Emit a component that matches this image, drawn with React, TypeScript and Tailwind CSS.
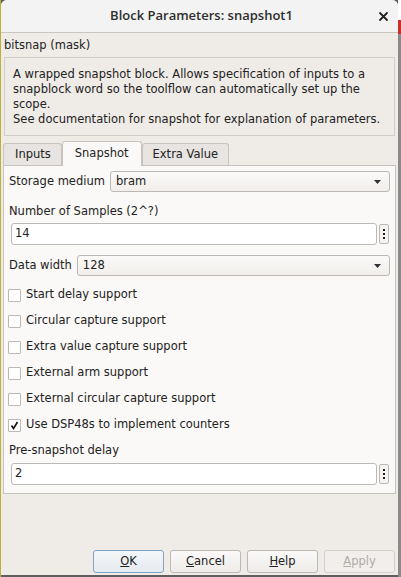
const font = { fontFamily: '"DejaVu Sans", "Liberation Sans", sans-serif' };

const checks = [
  { label: "Start delay support", on: false },
  { label: "Circular capture support", on: false },
  { label: "Extra value capture support", on: false },
  { label: "External arm support", on: false },
  { label: "External circular capture support", on: false },
  { label: "Use DSP48s to implement counters", on: true },
];

function Combo({ value }: { value: string }) {
  return (
    <div className="flex-1 h-[21px] flex items-center justify-between pl-[5px] pr-[8px] rounded-[3px] border border-[#bcb8b3] bg-gradient-to-b from-[#fbfaf9] to-[#f1eeeb] text-[11.5px] text-[#222]">
      <span>{value}</span>
      <svg width="7" height="4" viewBox="0 0 7 4">
        <path d="M0 0 L7 0 L3.5 4 Z" fill="#333" />
      </svg>
    </div>
  );
}

function Field({ value }: { value: string }) {
  return (
    <div className="flex items-center gap-[2px] pl-[7px] pr-[6px]">
      <div className="flex-1 h-[22px] flex items-center pl-[3px] rounded-[3px] border border-[#bcb8b3] bg-white text-[11.5px] text-[#222]">
        {value}
      </div>
      <div className="w-[10px] h-[20px] rounded-[2px] border border-[#bcb8b3] bg-[#f5f3f1] flex flex-col items-center justify-center gap-[2px]">
        <span className="w-[2px] h-[2px] bg-[#222]" />
        <span className="w-[2px] h-[2px] bg-[#222]" />
        <span className="w-[2px] h-[2px] bg-[#222]" />
      </div>
    </div>
  );
}

function Btn({ children, focus, disabled }: { children: React.ReactNode; focus?: boolean; disabled?: boolean }) {
  return (
    <button
      className={
        "w-[71px] h-[23px] rounded-[3px] border text-[11.5px] " +
        (focus
          ? "border-[#7fa3c6] bg-gradient-to-b from-[#f3f6f9] to-[#e6ebf0] text-[#222]"
          : disabled
          ? "border-[#d3cfcb] bg-[#f1eeeb] text-[#b0aca8]"
          : "border-[#bcb8b3] bg-gradient-to-b from-[#fbfaf9] to-[#eeebe8] text-[#222]")
      }
    >
      {children}
    </button>
  );
}

export default function App() {
  return (
    <div style={font} className="w-[401px] h-[577px] bg-[#5e5e5e] flex overflow-hidden">
      <div className="w-[1px] bg-[#b8b23a]" />
      <div className="w-[397px] h-[575px] flex flex-col rounded-t-[6px] overflow-hidden bg-[#efebe7]">
        {/* title bar */}
        <div className="h-[33px] shrink-0 flex items-center bg-[#f3f3f3] border-b border-[#c9c6c2] relative">
          <div className="flex-1 text-center text-[13px] text-[#2e2e2e] font-semibold pl-[4px]" style={{ fontFamily: '"Open Sans", sans-serif' }}>
            Block Parameters: snapshot1
          </div>
          <div className="absolute right-[9px] top-[11px]">
            <svg width="11" height="11" viewBox="0 0 11 11">
              <path d="M2 2 L9 9 M9 2 L2 9" stroke="#222" strokeWidth="1.8" strokeLinecap="round" />
            </svg>
          </div>
        </div>

        <div className="px-[3px] pt-[4px] text-[11.5px] text-[#222] leading-[16px]">bitsnap (mask)</div>

        <div className="mx-[3px] mt-[4px] border border-[#d1cdc9] bg-[#efebe7] pl-[8px] pr-[4px] pt-[9px] pb-[8px] text-[11.5px] leading-[15px] text-[#222]">
          A wrapped snapshot block. Allows specification of inputs to a snapblock word so the toolflow can automatically set up the scope.
          <br />
          See documentation for snapshot for explanation of parameters.
        </div>

        {/* tabs */}
        <div className="mt-[4px] mx-[2px] flex items-end h-[25px] text-[11.5px] text-[#222]">
          <div className="h-[22px] pl-[11px] pr-[10px] flex items-center border border-b-0 border-[#c7c3bf] rounded-t-[3px] bg-[#e7e4e1]">Inputs</div>
          <div className="h-[25px] px-[12px] flex items-center border border-b-0 border-[#c7c3bf] rounded-t-[3px] bg-[#fbf9f7] relative top-[1px]">Snapshot</div>
          <div className="h-[22px] px-[10px] flex items-center border border-b-0 border-[#c7c3bf] rounded-t-[3px] bg-[#e7e4e1]">Extra Value</div>
        </div>
        <div className="mx-[2px] h-[329px] border border-[#c7c3bf] bg-[#fbf9f7] text-[11.5px] text-[#222] pt-[5px]">
          <div className="flex items-center gap-[5px] pl-[5px] pr-[5px]">
            <span>Storage medium</span>
            <Combo value="bram" />
          </div>
          <div className="pl-[5px] mt-[11px] leading-[16px]">Number of Samples (2^?)</div>
          <div className="mt-[4px]"><Field value="14" /></div>
          <div className="flex items-center gap-[5px] pl-[5px] pr-[5px] mt-[10px]">
            <span>Data width</span>
            <Combo value="128" />
          </div>
          <div className="flex flex-col gap-[10px] mt-[11px] pl-[4px]">
            {checks.map((c) => (
              <div key={c.label} className="flex items-center gap-[5px] h-[16px]">
                <div className="w-[13px] h-[13px] border border-[#bcb8b3] bg-white flex items-center justify-center rounded-[1px]">
                  {c.on && (
                    <svg width="9" height="9" viewBox="0 0 9 9">
                      <path d="M1.5 4.5 L3.5 7.5 L7.5 1" stroke="#111" strokeWidth="1.6" fill="none" />
                    </svg>
                  )}
                </div>
                <span>{c.label}</span>
              </div>
            ))}
          </div>
          <div className="pl-[5px] mt-[9px] leading-[16px]">Pre-snapshot delay</div>
          <div className="mt-[5px]"><Field value="2" /></div>
        </div>

        <div className="flex-1" />
        <div className="flex justify-end gap-[6px] pr-[3px] pb-[2px]">
          <Btn focus><u>O</u>K</Btn>
          <Btn><u>C</u>ancel</Btn>
          <Btn><u>H</u>elp</Btn>
          <Btn disabled><u>A</u>pply</Btn>
        </div>
      </div>
      <div className="flex-1 flex flex-col">
        <div className="h-[20px] bg-[#ffffff]" />
        <div className="h-[14px] bg-[#c9302c]" />
        <div className="flex-1 bg-[#8a8a8a]" />
      </div>
    </div>
  );
}
